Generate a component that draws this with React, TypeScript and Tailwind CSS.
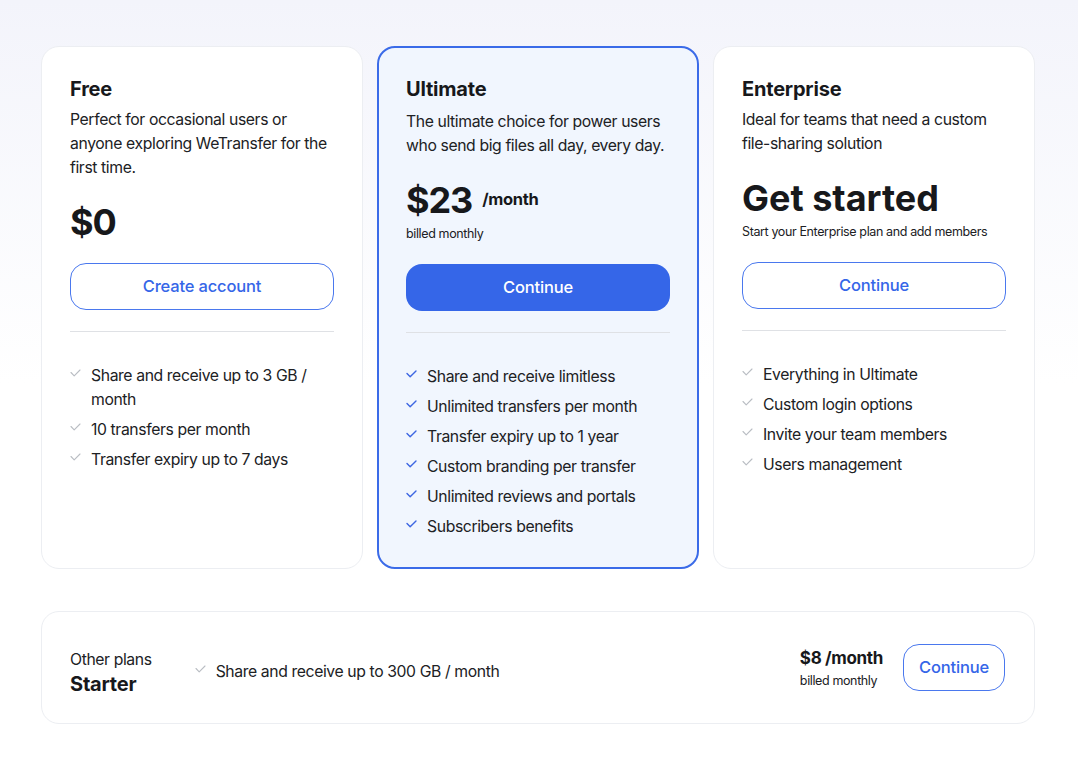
import React from 'react';

type Plan = {
  name: string;
  desc: string;
  price: string;
  per?: string;
  note?: string;
  cta: string;
  features: string[];
  featured?: boolean;
};

const plans: Plan[] = [
  {
    name: 'Free',
    desc: 'Perfect for occasional users or anyone exploring WeTransfer for the first time.',
    price: '$0',
    cta: 'Create account',
    features: ['Share and receive up to 3 GB / month', '10 transfers per month', 'Transfer expiry up to 7 days'],
  },
  {
    name: 'Ultimate',
    desc: 'The ultimate choice for power users who send big files all day, every day.',
    price: '$23',
    per: '/month',
    note: 'billed monthly',
    cta: 'Continue',
    featured: true,
    features: [
      'Share and receive limitless',
      'Unlimited transfers per month',
      'Transfer expiry up to 1 year',
      'Custom branding per transfer',
      'Unlimited reviews and portals',
      'Subscribers benefits',
    ],
  },
  {
    name: 'Enterprise',
    desc: 'Ideal for teams that need a custom file-sharing solution',
    price: 'Get started',
    note: 'Start your Enterprise plan and add members',
    cta: 'Continue',
    features: ['Everything in Ultimate', 'Custom login options', 'Invite your team members', 'Users management'],
  },
];

const Check = ({ blue }: { blue?: boolean }) => (
  <svg width="11" height="8" viewBox="0 0 11 8" className="mt-[5px] shrink-0" fill="none">
    <path
      d="M1 3.5 L4.2 6.8 L10 1"
      stroke={blue ? '#3d66e2' : '#b9bdc3'}
      strokeWidth={blue ? 1.4 : 1.1}
      strokeLinecap="round"
      strokeLinejoin="round"
    />
  </svg>
);

const PlanCard = ({ plan }: { plan: Plan }) => (
  <div
    className={`rounded-[18px] pb-7 ${
      plan.featured
        ? 'border-2 border-[#3b6be8] bg-[#f1f6fe] px-[27px] pt-[27px]'
        : 'border border-[#eceef2] bg-white px-7 pt-7'
    }`}
  >
    <h2 className="text-[20px] font-bold leading-7 tracking-[-0.01em] text-[#17181b]">{plan.name}</h2>
    <p
      className={`text-[15.75px] leading-6 tracking-[-0.025em] text-[#202124] ${
        plan.featured ? 'mt-[7px]' : 'mt-[5px]'
      }`}
    >
      {plan.desc}
    </p>
    <div className="mt-[22px] flex items-center gap-[10px]">
      <span
        className={`text-[36px] font-bold leading-10 text-[#17181b] ${
          plan.per || plan.price === '$0' ? 'tracking-[-0.03em]' : 'tracking-normal'
        }`}
      >
        {plan.price}
      </span>
      {plan.per && (
        <span className="-mt-[3px] text-[16.5px] font-bold leading-6 tracking-[-0.02em] text-[#17181b]">
          {plan.per}
        </span>
      )}
    </div>
    {plan.note && (
      <p className="mt-[5px] text-[12.5px] leading-[18px] tracking-[-0.03em] text-[#202124]">{plan.note}</p>
    )}
    <button
      className={`mt-[21px] h-[47px] w-full rounded-2xl text-[16.5px] font-medium tracking-[-0.01em] ${
        plan.featured ? 'bg-[#3566e8] text-white' : 'border border-[#4a78ee] bg-white text-[#3566e8]'
      }`}
    >
      {plan.cta}
    </button>
    <div className="mt-[21px] h-px bg-[#dfe1e5]" />
    <ul className="mt-[32px] flex flex-col gap-[6px]">
      {plan.features.map((f) => (
        <li
          key={f}
          className="flex items-start gap-[10px] text-[15.75px] leading-6 tracking-[-0.025em] text-[#202124]"
        >
          <Check blue={plan.featured} />
          <span>{f}</span>
        </li>
      ))}
    </ul>
  </div>
);

export default function App() {
  return (
    <div
      className="h-screen overflow-hidden bg-gradient-to-b from-[#f3f4fb] via-white to-white"
      style={{ fontFamily: 'Inter, "Noto Sans", sans-serif' }}
    >
      <div className="ml-[41px] w-[994px] pt-[46px]">
        <div className="grid grid-cols-3 gap-[14px]">
          {plans.map((p) => (
            <PlanCard key={p.name} plan={p} />
          ))}
        </div>

        <div className="mt-[42px] flex h-[113px] items-center rounded-[18px] border border-[#eceef2] bg-white pl-7 pr-[29px]">
          <div className="mt-[9px] flex flex-col">
            <span className="text-[15.75px] leading-6 tracking-[-0.025em] text-[#202124]">Other plans</span>
            <span className="text-[20px] font-bold leading-6 tracking-[-0.01em] text-[#17181b]">Starter</span>
          </div>
          <div className="ml-[43px] mt-[9px] flex items-start gap-[10px] text-[15.75px] leading-6 tracking-[-0.025em] text-[#202124]">
            <Check />
            <span>Share and receive up to 300 GB / month</span>
          </div>
          <div className="ml-auto flex flex-col">
            <span className="text-[17px] font-bold leading-6 tracking-[-0.02em] text-[#17181b]">$8 /month</span>
            <span className="mt-[2px] text-[12.5px] leading-[18px] tracking-[-0.03em] text-[#202124]">
              billed monthly
            </span>
          </div>
          <button className="ml-5 h-[47px] w-[102px] rounded-2xl border border-[#4a78ee] bg-white text-[16.5px] font-medium tracking-[-0.01em] text-[#3566e8]">
            Continue
          </button>
        </div>
      </div>
    </div>
  );
}
